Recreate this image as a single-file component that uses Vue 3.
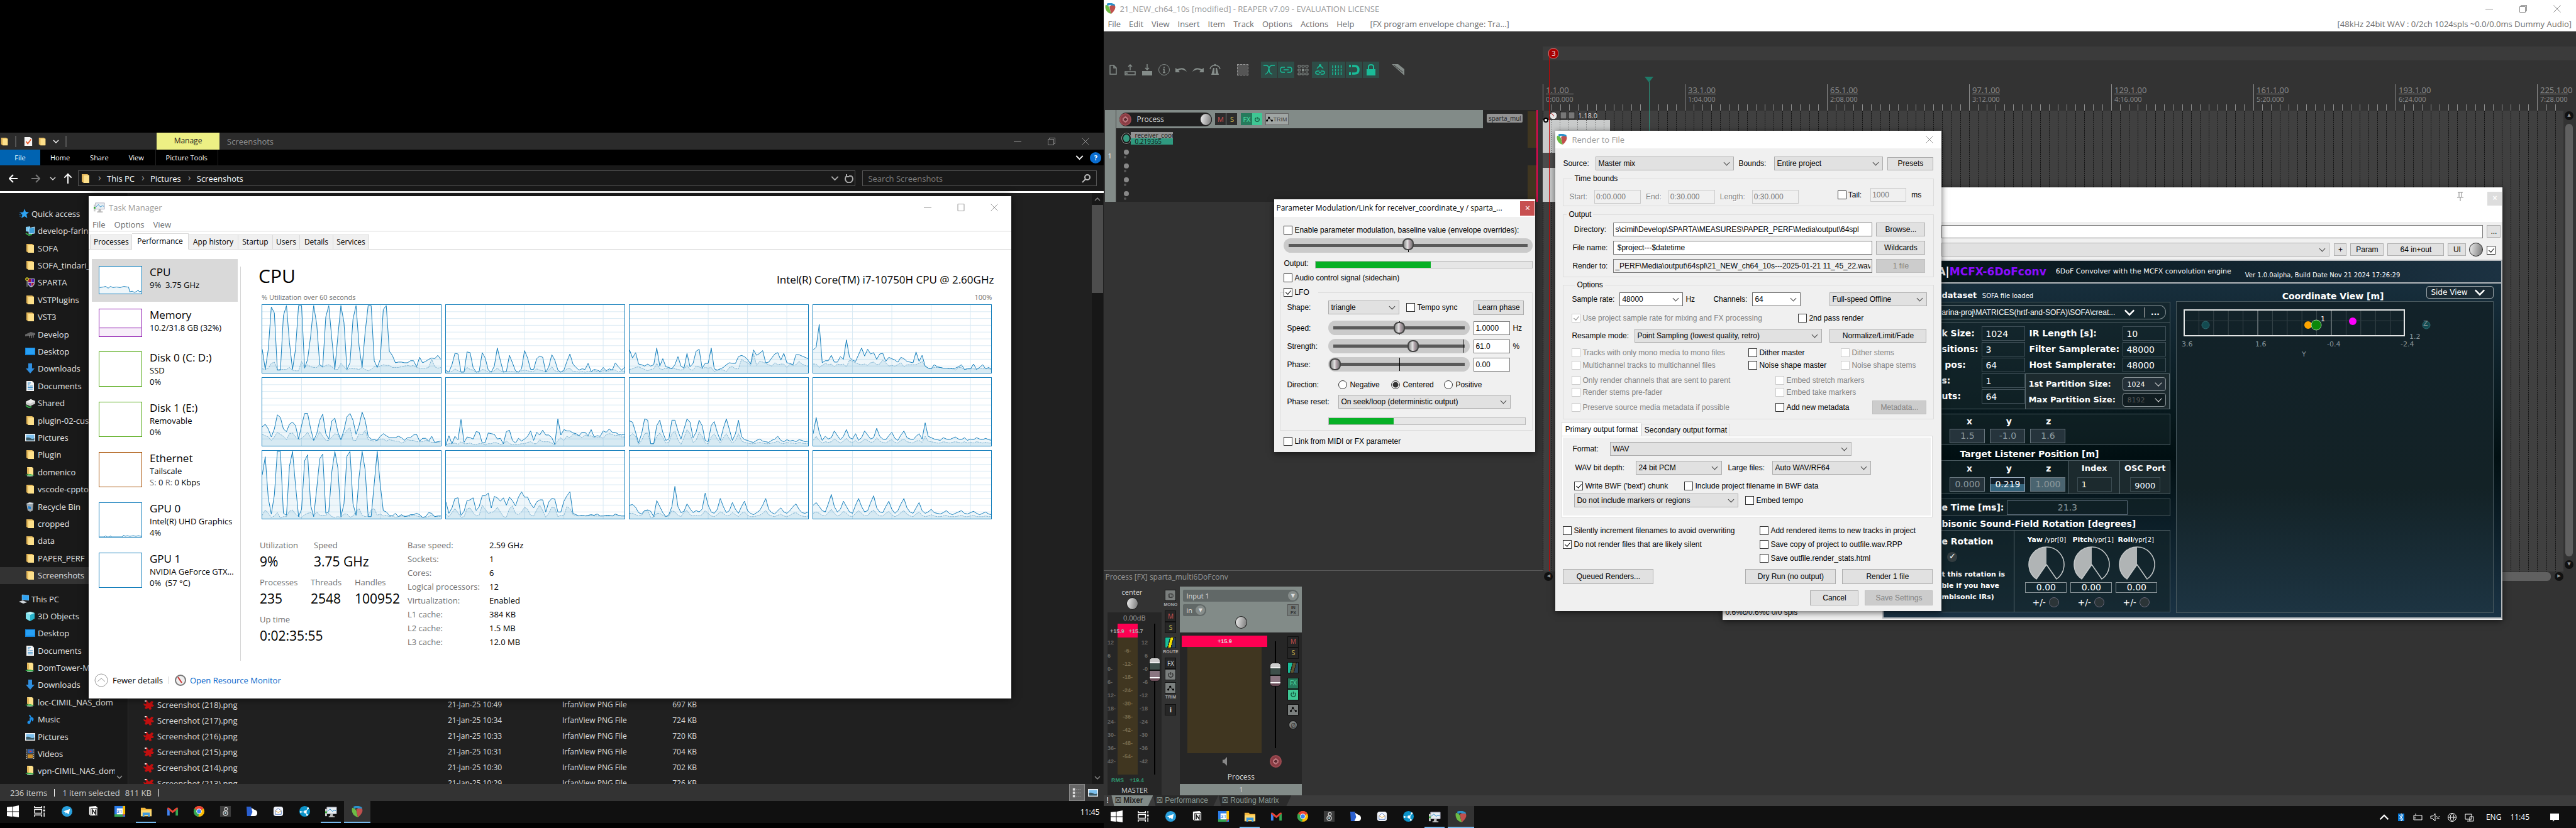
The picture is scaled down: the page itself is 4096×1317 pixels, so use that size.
<script setup>
const quick = [
  ['star', 'Quick access', true], ['netpc', 'develop-farina'], ['folder', 'SOFA'], ['folder', 'SOFA_tindari_'],
  ['shield', 'SPARTA'], ['folder', 'VSTPlugins'], ['folder', 'VST3'], ['chip', 'Develop'], ['desktop', 'Desktop'],
  ['down', 'Downloads'], ['doc', 'Documents'], ['drive', 'Shared'], ['folder', 'plugin-02-custom'], ['pic', 'Pictures'],
  ['folder', 'Plugin'], ['netfolder', 'domenico'], ['folder', 'vscode-cpptools'], ['bin', 'Recycle Bin'],
  ['folder', 'cropped'], ['folder', 'data'], ['folder', 'PAPER_PERF'], ['folder', 'Screenshots'],
]
const thisPc = [
  ['pc', 'This PC', true], ['cube', '3D Objects'], ['desktop', 'Desktop'], ['doc', 'Documents'], ['netfolder', 'DomTower-M'],
  ['down', 'Downloads'], ['netfolder', 'loc-CIMIL_NAS_dom'], ['music', 'Music'], ['pic', 'Pictures'], ['video', 'Videos'],
  ['netfolder', 'vpn-CIMIL_NAS_dom'],
]
const files = [
  ['218', '10:49', '697'], ['217', '10:34', '724'], ['216', '10:33', '720'],
  ['215', '10:31', '704'], ['214', '10:30', '702'], ['213', '10:29', '726'],
]
const apps = ['win', 'taskview', 'telegram', 'notion', 'cal', 'explorer', 'gmail', 'chrome', 'eight', 'bb', 'mail', 'share', 'monitor', 'reaper']
const appState = { explorer: 'open', monitor: 'open', reaper: 'open active' }
const crumbs = ['This PC', 'Pictures', 'Screenshots']

const tmTabs = ['Processes', 'Performance', 'App history', 'Startup', 'Users', 'Details', 'Services']
const devices = [
  { n: 'CPU', l: ['9%  3.75 GHz'], c: '#117dbb', on: true, line: '0,35 6,34 10,33 14,36 18,33 22,35 28,34 34,35 40,33 46,34 48,34 50,42 54,41 58,43 62,41 64,39 66,42 69,41' },
  { n: 'Memory', l: ['10.2/31.8 GB (32%)'], c: '#8b12ae', line: '0,31 69,31' },
  { n: 'Disk 0 (C: D:)', l: ['SSD', '0%'], c: '#4da60c', tall: true },
  { n: 'Disk 1 (E:)', l: ['Removable', '0%'], c: '#4da60c', tall: true },
  { n: 'Ethernet', l: ['Tailscale', null], c: '#a74f01', tall: true },
  { n: 'GPU 0', l: ['Intel(R) UHD Graphics', '4%'], c: '#117dbb', tall: true, line: '0,56 8,56 10,54 12,56 17,56 18,54 20,56 37,56 40,53 42,55 46,54 50,55 56,54 60,55 64,54 69,55' },
  { n: 'GPU 1', l: ['NVIDIA GeForce GTX...', '0%  (57 °C)'], c: '#117dbb', tall: true },
]
const stats = [
  [['Utilization', '9%'], ['Speed', '3.75 GHz']],
  [['Processes', '235'], ['Threads', '2548'], ['Handles', '100952']],
  [['Up time', '0:02:35:55']],
]
const specs = [
  ['Base speed:', '2.59 GHz'], ['Sockets:', '1'], ['Cores:', '6'], ['Logical processors:', '12'],
  ['Virtualization:', 'Enabled'], ['L1 cache:', '384 KB'], ['L2 cache:', '1.5 MB'], ['L3 cache:', '12.0 MB'],
]
const cores = [
  ['35,5,35,98,89,4,4,85,100,45,5,35,100,100,7,20,55,100,72,12,9,83,100,50,5,55,100,75,5,15,80,100,40,8,60,100,100,18,8,20,94,100,32,26,15,16,16,15,15,18,18,9,23,15,17,20,22,21,26,20',
    '6,5,7,14,16,5,5,5,5,8,4,3,3,17,9,12,9,8,8,12,8,11,12,9,5,5,14,9,4,7,6,6,5,8,5,3,5,9,9,10,12,11,11,8,8,8,9,10,11,10,11,8,7,7,7,8,20,9,7,8'],
  ['4,1,12,29,28,1,1,31,30,8,1,2,30,22,4,1,10,37,18,1,2,26,15,3,1,6,33,22,5,5,21,25,23,1,9,27,19,4,1,4,17,28,13,8,4,6,5,14,2,5,4,2,8,3,6,4,15,9,4,8',
    '1,1,2,6,3,1,2,8,5,4,1,1,5,4,1,1,3,7,3,1,2,2,2,1,1,3,4,3,2,2,6,4,3,1,4,9,3,2,1,2,6,7,2,2,1,2,1,2,2,3,2,1,4,2,3,5,4,1,3,2'],
  ['34,22,30,13,12,10,13,10,12,37,10,21,9,8,6,12,24,10,7,29,9,14,32,35,7,14,14,37,6,4,6,8,12,15,14,14,24,26,24,20,13,34,26,29,33,15,16,22,28,30,19,29,15,14,12,27,27,25,23,21',
    '5,6,8,9,7,5,3,5,6,14,6,5,7,6,7,6,5,4,6,11,5,4,10,9,6,8,7,8,2,4,5,4,2,8,9,6,6,20,17,15,11,28,11,17,16,14,12,10,15,12,13,13,8,13,11,12,17,13,11,10'],
  ['34,38,72,15,18,18,26,16,16,24,20,49,23,19,17,27,37,25,35,28,30,20,28,29,17,23,21,19,16,23,21,17,16,15,31,17,26,10,7,6,12,9,8,7,7,7,6,7,9,12,5,6,6,13,5,8,12,6,8,5',
    '13,13,8,11,14,12,13,9,13,12,13,9,19,17,15,13,12,13,11,15,16,12,13,19,15,10,11,10,12,15,9,12,12,12,12,14,17,10,7,6,8,8,8,7,7,6,7,4,8,8,5,6,6,6,5,7,6,6,6,5'],
  ['28,32,25,13,25,46,42,25,21,32,35,30,10,30,48,48,25,8,18,38,47,18,10,37,41,20,9,23,43,48,38,17,30,50,38,14,10,9,8,14,18,15,12,12,12,14,12,8,12,12,16,17,7,11,11,7,14,5,6,7',
    '17,15,13,8,13,20,17,14,9,18,19,13,9,11,15,20,12,8,12,21,14,8,8,13,18,16,9,17,23,27,8,8,18,16,23,9,8,7,8,10,10,7,9,8,7,7,4,6,9,8,8,6,6,6,8,7,5,5,5,4'],
  ['1,15,3,14,9,39,5,13,12,10,21,20,4,5,19,18,17,10,11,3,21,23,8,4,11,7,10,14,22,8,20,16,23,16,16,12,2,40,16,24,22,22,19,18,15,20,20,15,24,13,15,14,22,20,25,20,20,17,16,17',
    '1,3,3,4,2,6,3,3,4,2,2,3,3,2,3,3,5,4,2,3,7,3,2,2,2,3,3,5,6,3,3,9,6,6,6,4,1,8,12,8,14,12,17,16,15,12,16,14,15,12,12,13,11,17,18,17,15,16,13,13'],
  ['37,35,20,4,18,40,38,3,3,30,38,20,8,10,38,38,22,10,25,40,35,12,20,38,30,8,6,30,36,20,8,26,40,24,8,18,38,14,9,8,6,5,8,10,7,6,5,8,10,14,8,6,9,7,8,6,9,8,6,7',
    '14,18,14,2,8,18,19,3,3,14,19,12,4,5,18,22,9,2,12,24,18,5,8,20,14,4,3,13,18,10,4,12,18,10,4,8,18,7,5,4,3,3,4,5,4,3,3,4,5,7,4,3,5,4,4,3,5,4,3,4'],
  ['18,42,20,8,14,10,12,22,15,9,14,24,12,10,18,8,12,22,16,10,12,26,14,10,9,15,20,11,8,16,22,12,10,9,14,18,10,34,14,12,10,9,8,12,10,9,11,13,10,9,12,8,10,9,12,10,9,11,9,8',
    '8,14,8,4,6,5,6,10,7,4,7,11,6,5,8,4,6,10,8,5,6,12,7,5,4,7,9,5,4,8,10,6,5,4,7,8,5,14,7,6,5,4,4,6,5,4,5,6,5,4,6,4,5,4,6,5,4,5,4,4'],
  ['65,92,30,7,35,100,100,8,5,78,100,50,3,14,86,95,20,3,45,89,96,8,10,70,100,75,3,22,93,100,22,5,62,100,73,3,3,52,100,50,12,10,5,4,8,3,6,3,4,6,6,8,6,2,3,9,8,3,4,4',
    '5,13,8,2,4,9,1,3,3,11,13,7,3,2,6,8,9,5,10,5,5,5,8,3,2,3,2,7,7,2,4,11,15,5,3,4,13,15,5,7,4,5,3,4,2,3,4,4,3,4,6,4,3,2,2,3,6,3,3,4'],
  ['25,8,16,30,31,5,11,27,28,31,12,18,34,34,38,16,33,31,26,31,20,32,27,19,32,40,32,32,22,16,25,28,28,10,25,30,29,10,10,26,34,40,8,6,4,5,4,5,6,5,7,4,4,5,5,4,7,5,4,4',
    '7,3,9,15,9,2,3,15,16,9,4,5,20,14,8,9,11,17,10,3,2,15,19,8,6,10,17,14,5,4,13,20,12,2,8,17,16,3,5,5,18,15,6,5,4,5,4,4,5,4,4,4,4,4,4,4,6,5,4,4'],
  ['20,21,17,9,7,12,13,11,3,27,18,9,3,6,18,48,18,9,11,22,15,9,12,10,14,38,20,10,8,14,30,18,9,12,24,14,8,18,26,12,8,6,9,12,20,30,14,9,7,12,16,10,8,12,18,22,14,9,8,10',
    '8,8,6,4,5,12,12,2,2,8,8,5,3,4,12,10,5,3,10,12,6,4,5,4,6,12,8,4,3,6,10,8,4,5,9,6,3,8,10,5,3,3,4,5,8,12,6,4,3,5,7,4,3,5,8,9,6,4,3,4'],
  ['20,24,18,12,10,22,36,18,10,14,26,18,10,8,20,30,18,10,12,24,34,16,10,9,18,26,14,8,12,22,30,16,10,8,16,24,12,8,10,14,9,8,7,9,12,8,6,8,10,12,8,7,9,11,8,6,8,10,7,6',
    '8,10,8,5,4,9,14,8,4,6,11,8,4,3,8,12,8,4,5,10,13,7,4,4,8,11,6,3,5,9,12,7,4,3,7,10,5,3,4,6,4,3,3,4,5,3,3,3,4,5,3,3,4,5,3,3,3,4,3,3'],
].map(pair => pair.map(s => s.split(',').map((v, i, a) => `${(i * 286 / (a.length - 1)).toFixed(1)},${(110 - v * 1.09).toFixed(1)}`).join(' ')))

const menus = ['File', 'Edit', 'View', 'Insert', 'Item', 'Track', 'Options', 'Actions', 'Help']
const tools = ['new', 'open', 'save', 'info', 'undo', 'redo', 'metro']
const modes = [['xfade', 1], ['link', 1], ['group', 0], ['envlink', 1], ['gridlines', 1], ['snap', 1], ['lock', 1]]
const marks = ['1.1.00', '33.1.00', '65.1.00', '97.1.00', '129.1.00', '161.1.00', '193.1.00', '225.1.00']
const times = ['0:00.000', '1:04.000', '2:08.000', '3:12.000', '4:16.000', '5:20.000', '6:24.000', '7:28.000']
const ticks = Array.from({ length: 115 }, (_, i) => Math.round(i * 14.12))
const scaleL = ['12', '6', '0-', '6-', '12-', '18-', '24-', '30-', '36-', '42-']
const scaleR = ['12', '6', '-0', '-6', '-12', '-18', '-24', '-30', '-36', '-42']
const scaleC = ['-6-', '-12-', '-18-', '-24-', '-30-', '-36-', '-42-', '-48-', '-54-']
const lfo = [
  { n: 'Speed:', v: 50, t: '1.0000', u: 'Hz', m: 50 },
  { n: 'Strength:', v: 61, t: '61.0', u: '%', m: 95 },
  { n: 'Phase:', v: 0, t: '0.00', u: '', m: 50 },
]
const paths = [
  ['Directory:', 's\\cimil\\Develop\\SPARTA\\MEASURES\\PAPER_PERF\\Media\\output\\64spl', 'Browse...'],
  ['File name:', ' $project---$datetime', 'Wildcards'],
  ['Render to:', '_PERF\\Media\\output\\64spl\\21_NEW_ch64_10s---2025-01-21 11_45_22.wav', '1 file'],
]
const sofaRows = [['k Size:', '1024'], ['sitions:', '3'], ['\u00a0pos:', '64'], ['s:', '1'], ['uts:', '64']]
const irRows = [['IR Length [s]:', '10'], ['Filter Samplerate:', '48000'], ['Host Samplerate:', '48000']]
const rot = [['Yaw', ' /ypr[0]'], ['Pitch', '/ypr[1]'], ['Roll', '/ypr[2]']]
</script>

<template>
  <svg class="defs" width="0" height="0" aria-hidden="true">
    <symbol id="folder" viewBox="0 0 16 16"><path d="M2 1h9l3 2v12H5l-3-2z" fill="#e3b75a" /><path d="M5 3h9v12H5z" fill="#fde08b" /></symbol>
    <symbol id="netfolder" viewBox="0 0 16 16"><path d="M3 0h8l2 2v10H5l-2-2z" fill="#fde08b" /><path d="M3 0l3 2v10l-3-2z" fill="#e3b75a" /><path d="M0 12l8-1 7 2-8 2z" fill="#37b24d" /><path d="M3 14h9" stroke="#ddd" /></symbol>
    <symbol id="star" viewBox="0 0 16 16"><path d="M9 0l2 5 5 .5-4 3.500 1.500 6L9 12l-5 3 1.500-5.500L2 6l5-.5z" fill="#2ea3f2" /><path d="M1 6h4M0 9h4M1 12h3" stroke="#1f6fb0" /></symbol>
    <symbol id="netpc" viewBox="0 0 16 16"><path d="M1 2l7-1v9l-7-1z" fill="#7cc8f0" /><path d="M6 4l9-2v10l-9 1z" fill="#3f9fd8" stroke="#bfe3f7" /><path d="M1 12l5 3 5-1" stroke="#37b24d" stroke-width="2" fill="none" /></symbol>
    <symbol id="shield" viewBox="0 0 16 16"><path d="M4 2h11v8q-1 4-5.500 6Q5 14 4 10z" fill="#b8b8c8" /><path d="M5 3h4v5H5zM10 9h4q-1 4-4 5z" fill="#a3123a" /><path d="M10 3h4v5h-4zM5 9h4v5q-3-1-4-5z" fill="#4b1fb5" /><circle cx="3" cy="3" r="2" fill="none" stroke="#e8d820" stroke-width="1.500" /><path d="M3 5v10" stroke="#aaa" /></symbol>
    <symbol id="chip" viewBox="0 0 16 16"><path d="M0 8l9-4 7 2v3l-9 1-7 1z" fill="#666" /><path d="M7 9v4M10 9v5M13 9v4" stroke="#999" /></symbol>
    <symbol id="desktop" viewBox="0 0 16 16"><path d="M0 2h16v12H0z" fill="#1583d8" /><path d="M1 3h14v9H1z" fill="#27a0f5" /></symbol>
    <symbol id="down" viewBox="0 0 16 16"><path d="M5 0h6v8h4l-7 8-7-8h4z" fill="#2f8fe0" /></symbol>
    <symbol id="doc" viewBox="0 0 16 16"><path d="M2 0h9l3 3v13H2z" fill="#f4f4f4" /><path d="M4 3h5M4 5h3M8 8h4M4 8h3M4 10.500h8M4 13h8" stroke="#2b88c8" /></symbol>
    <symbol id="task" viewBox="0 0 16 16"><path d="M1 0h10l4 3v13H1z" fill="#f4f4f4" /><path d="M4 8l3 4 6-8" fill="none" stroke="#e8531f" stroke-width="2" /></symbol>
    <symbol id="drive" viewBox="0 0 16 16"><path d="M1 6l8-4 7 3v4l-8 4-7-3z" fill="#c9c9c9" /><path d="M1 6l7 3 8-4-7-3z" fill="#ececec" /><path d="M1 12l5 3 4-1" stroke="#37b24d" stroke-width="2" fill="none" /></symbol>
    <symbol id="pic" viewBox="0 0 16 16"><path d="M0 2h16v12H0z" fill="#f2f2f2" /><path d="M1.500 3.500h13v9h-13z" fill="#7cc0ee" /><path d="M1.500 12.500V8q4-1 7 1t6 0v3.500z" fill="#3c5a66" /></symbol>
    <symbol id="bin" viewBox="0 0 16 16"><path d="M2 3l11-1-1 12-4 2-4-2z" fill="#9aa4ac" /><path d="M2 3l5-2 7 1-5 2z" fill="#dfe5ea" /><path d="M5 7l4 1v4l-4-1z" fill="#1d7fd1" /></symbol>
    <symbol id="pc" viewBox="0 0 16 16"><path d="M5 1l11 1v8L5 9z" fill="#2ea3f2" stroke="#bcd" stroke-width=".5" /><path d="M0 12l6-2 7 3-6 2z" fill="#cfd5da" /></symbol>
    <symbol id="cube" viewBox="0 0 16 16"><path d="M1 3l7-2 7 2v9l-7 4-7-4z" fill="#28b4cc" /><path d="M1 3l7 3v10l-7-4z" fill="#7fe2ee" /><path d="M1 3l7-2 7 2-7 3z" fill="#b9f3f8" /></symbol>
    <symbol id="music" viewBox="0 0 16 16"><path d="M7 1q1 4 4 5t0 5q2-3-3-4v5" fill="none" stroke="#1e90ea" stroke-width="2" /><circle cx="6" cy="13" r="2.500" fill="#1e90ea" /></symbol>
    <symbol id="video" viewBox="0 0 16 16"><path d="M1 0h14v16H1z" fill="#444" /><path d="M4 1h8v6H4z" fill="#2a62b5" /><path d="M4 9h8v6H4z" fill="#c58b2a" /><path d="M2.500 0v16M13.500 0v16" stroke="#ddd" stroke-dasharray="1 2" /><path d="M7 3h3v2H7z" fill="#e33" /></symbol>
    <symbol id="irfan" viewBox="0 0 18 16"><path d="M5 1q3-1 3 3l3 1 3-3 3 1-2 4 3 2-2 2h-3l1 4-3 1-2-3-4 2-2-2 2-3-3-1-1-3 4 1 1-2-2-2z" fill="#c00f0f" /><path d="M3 1h3v2H3z" fill="#eee" /></symbol>
    <symbol id="chev" viewBox="0 0 10 10"><path d="M1 3l4 4 4-4" fill="none" stroke="currentColor" stroke-width="1.400" /></symbol>
    <symbol id="min" viewBox="0 0 12 12"><path d="M0 6.500h12" stroke="currentColor" /></symbol>
    <symbol id="max" viewBox="0 0 12 12"><path d="M1 .5h10v11H1z" fill="none" stroke="currentColor" /></symbol>
    <symbol id="restore" viewBox="0 0 12 12"><path d="M.5 2.500h9v9h-9zM2.500 2.500v-2h9v9h-2" fill="none" stroke="currentColor" /></symbol>
    <symbol id="x" viewBox="0 0 12 12"><path d="M.5.5l11 11M11.500.5l-11 11" stroke="currentColor" /></symbol>
    <symbol id="power" viewBox="0 0 10 10"><path d="M3 2.500a3.300 3.300 0 1 0 4 0M5 1v4" fill="none" stroke="currentColor" stroke-width="1.300" /></symbol>
    <symbol id="env" viewBox="0 0 14 12"><path d="M2 9l4-6 5 6" fill="none" stroke="currentColor" stroke-width="1.500" /><circle cx="6" cy="3" r="2" /><circle cx="2" cy="9" r="2" /><circle cx="12" cy="9" r="2" /></symbol>

    <symbol id="win" viewBox="0 0 20 20"><path d="M0 3l9-1v8H0zM10 2l10-2v10H10zM0 11h9v8l-9-1zM10 11h10v9l-10-1.500z" fill="#fff" /></symbol>
    <symbol id="taskview" viewBox="0 0 20 20"><path d="M1 1v3h12V1M1 19v-3h12v3M1 7h12v6H1zM17 1v4M17 12v7" fill="none" stroke="#fff" stroke-width="1.500" /><path d="M15.500 7h3v3h-3z" fill="#fff" /></symbol>
    <symbol id="telegram" viewBox="0 0 20 20"><circle cx="10" cy="10" r="9" fill="#2aa1de" /><path d="M4 10l11-4-2 9-4-3-1 2-1-3z" fill="#fff" /></symbol>
    <symbol id="notion" viewBox="0 0 20 20"><path d="M3 2l11-1 3 3v13l-11 1-3-3z" fill="#fff" /><path d="M6 5h10v12H6z" fill="#fff" stroke="#111" /><path d="M8.500 15V7.500l5 7V7" fill="none" stroke="#111" stroke-width="1.600" /></symbol>
    <symbol id="cal" viewBox="0 0 20 20"><path d="M1 1h18v18H1z" fill="#2b7de9" /><path d="M15 1h4v14h-4z" fill="#fbbc04" /><path d="M1 15h14v4H1z" fill="#34a853" /><path d="M15 15h4l-4 4z" fill="#ea4335" /><path d="M5 5h10v10H5z" fill="#fff" /></symbol>
    <symbol id="explorer" viewBox="0 0 20 20"><path d="M1 3h7l2 2h9v12H1z" fill="#f5b83d" /><path d="M1 7h18v10H1z" fill="#ffd970" /><path d="M4 11h12v7h-3v-3H7v3H4z" fill="#3f9be0" /></symbol>
    <symbol id="gmail" viewBox="0 0 20 20"><path d="M1 5v12h4V9z" fill="#4285f4" /><path d="M19 5v12h-4V9z" fill="#34a853" /><path d="M1 5q0-2 3-1l6 5 6-5q3-1 3 1l-4 4-5 4-5-4z" fill="#ea4335" /></symbol>
    <symbol id="chrome" viewBox="0 0 20 20"><circle cx="10" cy="10" r="9" fill="#fbbc04" /><path d="M10 10L2.200 5.500A9 9 0 0 1 17.800 5.500z" fill="#ea4335" /><path d="M10 10L2.200 5.500A9 9 0 0 0 9 19z" fill="#34a853" /><circle cx="10" cy="10" r="4.500" fill="#fff" /><circle cx="10" cy="10" r="3.500" fill="#4285f4" /></symbol>
    <symbol id="eight" viewBox="0 0 20 20"><path d="M1 1h18v18H1z" fill="#3c3c3c" /><circle cx="10" cy="13" r="3.800" fill="none" stroke="#ccc" stroke-width="1.500" /><circle cx="11" cy="6" r="2.500" fill="none" stroke="#ccc" stroke-width="1.300" /><circle cx="10" cy="13" r="1.500" fill="#b8e4ee" /></symbol>
    <symbol id="bb" viewBox="0 0 20 20"><path d="M1 2h8v4l3 2-2 10H2z" fill="#2a5fd0" /><path d="M9 4l5 3q5 1 5 6t-5 5H8l3-7z" fill="#fff" /></symbol>
    <symbol id="mail" viewBox="0 0 20 20"><rect x="2" y="2" width="16" height="16" rx="4" fill="#f1f4fa" /><path d="M5 9l5-4 5 4v6H5z" fill="#fff" stroke="#5b7fc4" /><path d="M5 9l5 3 5-3" fill="none" stroke="#e0a030" /></symbol>
    <symbol id="share" viewBox="0 0 20 20"><circle cx="10" cy="10" r="9" fill="#0b93c9" /><path d="M3 11h8l5-6M11 11l3 5" fill="none" stroke="#fff" stroke-width="1.200" /><circle cx="11" cy="11" r="2.500" fill="#fff" /><circle cx="3.500" cy="11" r="1.500" fill="#fff" /><circle cx="15.500" cy="5" r="1.500" fill="#fff" /><circle cx="14" cy="16" r="1.500" fill="#fff" /></symbol>
    <symbol id="monitor" viewBox="0 0 20 20"><path d="M3 2h16v11H3z" fill="#e8eef2" stroke="#aab" /><path d="M4 9l4-4 4 4 3-2 3 1" fill="none" stroke="#1583c8" /><path d="M9 13h4v4H8zM6 17h10v2H6z" fill="#bbb" /><path d="M0 5h3v12H0z" fill="#ccc" /><path d="M0 9h3v3H0z" fill="#3a3" /></symbol>
    <symbol id="reaper" viewBox="0 0 20 20"><path d="M3 1q7-3 14 1 2 3-1 6L9 3 4 5z" fill="#2b93cc" /><path d="M1 3q5 1 7 5 1 6 3 11Q3 17 1 10 0 6 1 3z" fill="#6cbb45" /><path d="M8 5q6-2 10 0 2 6-7 14-2-5-3-14z" fill="#c0504d" /></symbol>

    <symbol id="new" viewBox="0 0 20 20"><path d="M5 3h6l4 4v10H5zM11 3v4h4" fill="none" stroke="currentColor" stroke-width="1.500" /></symbol>
    <symbol id="open" viewBox="0 0 20 20"><path d="M10 11V3M7 5l3-3 3 3M2 13h16v5H2z" fill="none" stroke="currentColor" stroke-width="1.500" /><path d="M3 14.500h3v2H3z" fill="currentColor" /></symbol>
    <symbol id="save" viewBox="0 0 20 20"><path d="M10 1v8M7 7l3 3 3-3" fill="none" stroke="currentColor" stroke-width="1.500" /><path d="M2 12h16v7H2z" fill="currentColor" /></symbol>
    <symbol id="info" viewBox="0 0 20 20"><circle cx="10" cy="10" r="8.500" fill="none" stroke="currentColor" /><path d="M10 5v2M8 9h2v5M8 14.500h4" fill="none" stroke="currentColor" stroke-width="1.600" /></symbol>
    <symbol id="undo" viewBox="0 0 20 20"><path d="M1 7v7h7l-2-3q5-4 13 2Q15 4 4 9z" fill="currentColor" /></symbol>
    <symbol id="redo" viewBox="0 0 20 20"><path d="M19 7v7h-7l2-3Q9 7 1 13 5 4 16 9z" fill="currentColor" /></symbol>
    <symbol id="metro" viewBox="0 0 20 20"><path d="M7 7h2v9h2V7h2l3 11H4z" fill="currentColor" /><path d="M2 9q1-5 6-6M18 9q-1-5-6-6" fill="none" stroke="currentColor" stroke-width="1.500" /><circle cx="10" cy="2.500" r="1.800" fill="currentColor" /></symbol>
    <symbol id="xfade" viewBox="0 0 20 20"><path d="M1 3h5q4 1 4 7t5 7M19 3h-5q-4 1-5 7t-5 7" fill="none" stroke="currentColor" stroke-width="1.400" /></symbol>
    <symbol id="link" viewBox="0 0 20 20"><path d="M8 6H4q-3 0-3 4t3 4h4M12 6h4q3 0 3 4t-3 4h-4M6 10h8" fill="none" stroke="currentColor" stroke-width="1.500" /></symbol>
    <symbol id="group" viewBox="0 0 20 20"><path d="M2 3h4v3H2zM8 3h4v3H8zM14 3h4v3h-4zM2 9h4v3H2zM14 9h4v3h-4zM2 15h4v3H2zM8 15h4v3H8zM14 15h4v3h-4z" fill="none" stroke="currentColor" /><path d="M8 8.500h4v4H8z" fill="currentColor" /></symbol>
    <symbol id="envlink" viewBox="0 0 20 20"><path d="M5 8l5-5 5 5M9 12H6q-3 0-3 2.500T6 17h3M11 12h3q3 0 3 2.500T14 17h-3M8 14.500h4" fill="none" stroke="currentColor" stroke-width="1.500" /><circle cx="10" cy="3" r="2" fill="currentColor" /></symbol>
    <symbol id="gridlines" viewBox="0 0 20 20"><path d="M3 3v15M7.500 3v15M12 3v15M16.500 3v15" stroke="currentColor" stroke-width="1.400" stroke-dasharray="4 1.500" /></symbol>
    <symbol id="snap" viewBox="0 0 20 20"><path d="M7 4h4q6 0 6 6t-6 6H7" fill="none" stroke="currentColor" stroke-width="3.500" /><path d="M2 2h3v4H2zM2 14h3v4H2z" fill="currentColor" /></symbol>
    <symbol id="lock" viewBox="0 0 20 20"><path d="M3 9h14v10H3z" fill="currentColor" /><path d="M6 9V5q0-3 4-3t4 3v4" fill="none" stroke="currentColor" stroke-width="2" /></symbol>
    <symbol id="razor" viewBox="0 0 20 20"><path d="M0 1h10l10 8v10z" fill="currentColor" /><path d="M4 3l14 11" stroke="#333" /></symbol>
  </svg>

  <main class="desk">
    <section class="left">
      <div class="void" />
      <header class="ex-title">
        <svg class="i14"><use href="#folder" /></svg><i class="vsep" />
        <svg class="i14 gapl"><use href="#task" /></svg><svg class="i14 gaps"><use href="#folder" /></svg>
        <svg class="i10"><use href="#chev" /></svg><i class="vsep" />
        <span class="manage">Manage</span><span class="ex-name">Screenshots</span>
        <div class="wbtns"><svg><use href="#min" /></svg><svg><use href="#restore" /></svg><svg><use href="#x" /></svg></div>
      </header>
      <nav class="ribbon">
        <a href="#" class="file">File</a><a href="#">Home</a><a href="#">Share</a><a href="#">View</a><a href="#" class="pt">Picture Tools</a>
        <span class="rend"><svg class="i13"><use href="#chev" /></svg><b>?</b></span>
      </nav>
      <div class="addr">
        <svg class="arr" viewBox="0 0 14 14"><path d="M14 7H1M7 1L1 7l6 6" /></svg>
        <svg class="arr dim" viewBox="0 0 14 14"><path d="M0 7h13M7 1l6 6-6 6" /></svg>
        <svg class="i10 rc"><use href="#chev" /></svg>
        <svg class="arr up" viewBox="0 0 14 18"><path d="M7 18V2M1 8l6-6 6 6" /></svg>
        <div class="path">
          <svg class="i16"><use href="#folder" /></svg>
          <template v-for="c in crumbs" :key="c"><i>›</i><span>{{ c }}</span></template>
          <svg class="i13 pd"><use href="#chev" /></svg>
          <svg class="rf" viewBox="0 0 14 14"><path d="M3 3a6 6 0 1 0 8 0M11 3h-4M3 0v4h4" /></svg>
        </div>
        <label class="search"><input aria-label="Search Screenshots" placeholder="Search Screenshots"><svg viewBox="0 0 14 14"><circle cx="9" cy="5" r="4" /><path d="M6 8l-5 5" /></svg></label>
      </div>
      <div class="ex-body">
        <aside>
          <ul class="q">
            <li v-for="[ic, t, top] in quick" :key="t" :class="{ top, sel2: t === 'Screenshots' }"><svg><use :href="'#' + ic" /></svg>{{ t }}</li>
          </ul>
          <ul class="p">
            <li v-for="[ic, t, top] in thisPc" :key="t" :class="{ top }"><svg><use :href="'#' + ic" /></svg>{{ t }}</li>
          </ul>
          <svg class="i10 more"><use href="#chev" /></svg>
        </aside>
        <div class="list">
          <table>
            <tbody>
              <tr v-for="[n, t, s] in files" :key="n">
                <td class="c1"><svg><use href="#irfan" /></svg>Screenshot ({{ n }}).png</td><td class="c2">21-Jan-25 {{ t }}</td><td class="c3">IrfanView PNG File</td><td class="c4">{{ s }} KB</td><td />
              </tr>
            </tbody>
          </table>
        </div>
        <div class="vbar"><svg class="i10 flip"><use href="#chev" /></svg><i /><svg class="i10"><use href="#chev" /></svg></div>
      </div>
      <footer class="status"><span>236 items</span><i /><span>1 item selected</span><span>811 KB</span><i />
        <div class="views"><b><svg viewBox="0 0 20 20"><path d="M2 2h4v4H2zM2 8h4v4H2zM2 14h4v4H2z" fill="#ddd" /><path d="M8 4h9M8 10h9M8 16h9" stroke="#999" stroke-dasharray="2 1" /></svg></b><svg class="i16"><use href="#pic" /></svg></div>
      </footer>
      <div class="taskbar bar-l">
        <button v-for="a in apps" :key="a" :class="[a, appState[a]]" :aria-label="a"><svg><use :href="'#' + a" /></svg><b v-if="a === 'cal'">31</b></button>
        <span class="clock">11:45</span>
      </div>
      <div class="strip" />

      <article class="tm">
        <header><svg class="i18"><use href="#monitor" /></svg><span>Task Manager</span>
          <div class="wbtns"><svg><use href="#min" /></svg><svg><use href="#max" /></svg><svg><use href="#x" /></svg></div></header>
        <nav class="tm-menu"><a href="#">File</a><a href="#">Options</a><a href="#">View</a></nav>
        <div class="tm-tabs"><button v-for="(t, i) in tmTabs" :key="t" :class="{ on: i === 1 }">{{ t }}</button></div>
        <div class="tm-body">
          <div class="devs">
            <div v-for="d in devices" :key="d.n" class="dev" :class="{ on: d.on, tall: d.tall }">
              <svg :style="{ color: d.c }" :viewBox="d.tall ? '0 0 69 56' : '0 0 69 45'">
                <polyline v-if="d.line" :points="`0,60 ${d.line} 69,60`" fill="currentColor" fill-opacity=".07" stroke="none" /><polyline v-if="d.line" :points="d.line" fill="none" stroke="currentColor" />
              </svg>
              <div><h3>{{ d.n }}</h3><p v-for="l in d.l" :key="l"><template v-if="l">{{ l }}</template><template v-else><em>S:</em> 0 <em>R:</em> 0 Kbps</template></p></div>
            </div>
          </div>
          <div class="perf">
            <div class="ph"><h1>CPU</h1><span>Intel(R) Core(TM) i7-10750H CPU @ 2.60GHz</span></div>
            <div class="pl"><span>% Utilization over 60 seconds</span><span>100%</span></div>
            <div class="graphs">
              <svg v-for="([u, k], i) in cores" :key="i" viewBox="0 0 286 110" preserveAspectRatio="none">
                <path d="M63 0v110M126 0v110M189 0v110M252 0v110M0 11h286M0 22h286M0 33h286M0 44h286M0 55h286M0 66h286M0 77h286M0 88h286M0 99h286" class="gl" />
                <polygon :points="`0,110 ${u} 286,110`" class="gu" /><polygon :points="`0,110 ${k} 286,110`" class="gk" />
                <polyline :points="k" class="lk" /><polyline :points="u" class="lu" />
              </svg>
            </div>
            <div class="pstats">
              <div class="big"><div v-for="(r, i) in stats" :key="i" :class="'r' + i"><dl v-for="[a, b] in r" :key="a"><dt>{{ a }}</dt><dd>{{ b }}</dd></dl></div></div>
              <table class="spec"><tbody><tr v-for="[a, b] in specs" :key="a"><th>{{ a }}</th><td>{{ b }}</td></tr></tbody></table>
            </div>
          </div>
        </div>
        <footer><svg class="cir" viewBox="0 0 22 22"><circle cx="11" cy="11" r="10" /><path d="M5 13l6-5 6 5" /></svg><span>Fewer details</span><i />
          <svg class="rm" viewBox="0 0 18 18"><circle cx="9" cy="9" r="8" fill="#eee" stroke="#777" stroke-width="2" /><path d="M5 4l6 9" stroke="#c33" stroke-width="2" /></svg><a href="#">Open Resource Monitor</a></footer>
      </article>
    </section>

    <section class="right">
      <header class="rp-title"><svg class="i18"><use href="#reaper" /></svg><span>21_NEW_ch64_10s [modified] - REAPER v7.09 - EVALUATION LICENSE</span>
        <div class="wbtns"><svg><use href="#min" /></svg><svg><use href="#restore" /></svg><svg><use href="#x" /></svg></div></header>
      <nav class="rp-menu"><a v-for="m in menus" :key="m" href="#">{{ m }}</a><span class="last">[FX program envelope change: Tra...]</span><span class="audio">[48kHz 24bit WAV : 0/2ch 1024spls ~0.0/0.0ms Dummy Audio]</span></nav>

      <div class="work">
        <div class="tcp">
          <div class="tools">
            <button v-for="t in tools" :key="t" :aria-label="t"><svg><use :href="'#' + t" /></svg></button>
            <i class="marq" />
            <button v-for="[t, on] in modes" :key="t" :class="{ on }" :aria-label="t"><svg><use :href="'#' + t" /></svg></button>
            <button class="rz" aria-label="razor"><svg><use href="#razor" /></svg></button>
          </div>
          <div class="track">
            <div class="tnum">1</div>
            <div class="tmain">
              <div class="thead">
                <div class="pill"><i class="rec" /><span>Process</span><i class="knob" /></div>
                <div class="ms"><button class="m">M</button><button class="s">S</button></div>
                <div class="fx"><button>FX</button><button class="pw" aria-label="bypass"><svg><use href="#power" /></svg></button></div>
                <button class="trim"><svg><use href="#env" /></svg>TRIM</button>
              </div>
              <div class="param"><i /><div><span>receiver_coor</span><b>0.219365</b></div></div>
              <div class="dots"><i v-for="n in 4" :key="n" /></div>
            </div>
            <div class="tfx"><span>sparta_mul</span></div>
            <div class="tmeter"><i /><i /></div>
          </div>
        </div>
        <div class="arr-pane">
          <div class="region"><b>3</b></div>
          <svg class="ruler" height="42"><g v-for="(m, i) in marks" :key="m">
            <rect :x="ticks[i * 16]" y="0" width="1" height="42" fill="#8c8c8c" />
            <text :x="ticks[i * 16] + 5" y="14" class="t1">{{ m }}</text><rect :x="ticks[i * 16] + 5" y="15" width="44" height="1" fill="#8c8c8c" />
            <text :x="ticks[i * 16] + 5" y="28" class="t2">{{ times[i] }}</text></g>
            <rect v-for="t in ticks" :key="t" :x="t" y="32" width="1" height="10" fill="#8c8c8c" />
          </svg>
          <svg class="lanes">
            <line v-for="t in ticks" :key="t" :x1="t + .5" :x2="t + .5" y1="0" y2="733" stroke="#151515" stroke-dasharray="2 1" />
            <rect x="0" y="15" width="107" height="130" fill="#c9cbcb" /><rect x="0" y="67" width="107" height="24" fill="#4c4c4c" />
            <line v-for="n in 7" :key="n" :x1="n * 14 - .5" :x2="n * 14 - .5" y1="15" y2="67" stroke="#444" stroke-dasharray="1 2" />
            <circle cx="17" cy="8" r="6" fill="#e6e6e6" stroke="#222" /><path d="M14 4l4 5" stroke="#a00" />
            <path d="M28 2h10v11H28zM41 2h10v11H41z" fill="#777" stroke="#222" />
            <text x="56" y="12" class="it">1.18.0</text>
            <circle cx="5" cy="15" r="3" fill="#fff" stroke="#000" stroke-width="2" />
          </svg>
          <i class="cursor" /><i class="play" />
          <div class="vs"><b>▲</b><i /><b>▼</b></div>
          <div class="hs"><b>◀</b><i /><b>▶</b></div>
        </div>
      </div>

      <div class="mixer">
        <p class="mx-l">Process [FX] sparta_multi6DoFconv</p>
        <div class="strips">
          <div class="master">
            <div class="mcol">
              <span class="ctr">center</span><i class="kn" />
              <div class="mbox">
                <span class="db">0.00dB</span>
                <div class="meters">
                  <ul class="sc"><li v-for="s in scaleL" :key="s">{{ s }}</li></ul>
                  <div class="mt"><i /><ul><li v-for="s in scaleC" :key="s">{{ s }}</li></ul></div>
                  <ul class="sc r"><li v-for="s in scaleR" :key="s">{{ s }}</li></ul>
                  <div class="fad"><i /></div>
                  <span class="pk"><b>+15.9</b><b>+15.7</b></span>
                </div>
                <span class="rms"><b>RMS</b><b>+19.4</b></span>
                <span class="mn">MASTER</span>
              </div>
            </div>
            <div class="mbt">
              <button class="g" aria-label="mono"><svg viewBox="0 0 12 12"><circle cx="5" cy="6" r="3.500" fill="none" stroke="#333" /><circle cx="7" cy="6" r="3.500" fill="none" stroke="#333" /></svg></button><small>MONO</small>
              <button class="m">M</button><button class="s">S</button>
              <button class="rt a" aria-label="route" /><small>ROUTE</small>
              <button class="fxx">FX</button><button class="g pw2" aria-label="power"><svg><use href="#power" /></svg></button>
              <button class="g tr" aria-label="trim"><svg><use href="#env" /></svg></button><small>TRIM</small>
              <button class="in">i</button>
            </div>
          </div>
          <div class="ch">
            <div class="chh">
              <button class="inp"><span>Input 1</span><i>▼</i></button>
              <div class="l2"><button class="inp sm"><span>in</span><i>▼</i></button><button class="infx">IN<br>FX</button></div>
              <i class="kn" />
            </div>
            <div class="chb">
              <div class="cm"><b>+15.9</b><i /><svg viewBox="0 0 10 16"><path d="M1 5h3l5-5v16L4 11H1z" fill="#888" /></svg></div>
              <div class="cf"><div class="fad"><i /></div><i class="rec" /></div>
              <div class="cb">
                <button class="m">M</button><button class="s">S</button><button class="rt" aria-label="route" />
                <button class="fxx gr">FX</button><button class="pw2 gr2" aria-label="power"><svg><use href="#power" /></svg></button>
                <button class="g tr" aria-label="trim"><svg><use href="#env" /></svg></button><button class="g ph0">Ø</button>
              </div>
              <span class="cn">Process</span>
            </div>
            <div class="chn">1</div>
          </div>
        </div>
      </div>
      <div class="docks"><span>!</span><a href="#" class="on"><i>☒</i>Mixer</a><a href="#"><i>☒</i>Performance</a><a href="#"><i>☒</i>Routing Matrix</a></div>
      <div class="taskbar bar-r">
        <button v-for="a in apps" :key="a" :class="[a, appState[a]]" :aria-label="a"><svg><use :href="'#' + a" /></svg><b v-if="a === 'cal'">31</b></button>
        <div class="tray">
          <svg class="i13 flip"><use href="#chev" /></svg>
          <svg viewBox="0 0 16 16"><path d="M3 2h10v12H3z" fill="#0a78d4" /><path d="M5 5l6 6-3 3V2l3 3-6 6" stroke="#fff" fill="none" /></svg>
          <svg viewBox="0 0 16 16"><path d="M1 5h13v7H1zM4 2v3M3 7v3" stroke="#fff" fill="none" /></svg>
          <svg viewBox="0 0 16 16"><path d="M1 6h3l4-4v12l-4-4H1zM10 6l5 5M15 6l-5 5" stroke="#fff" fill="none" /></svg>
          <svg viewBox="0 0 16 16"><circle cx="8" cy="8" r="6.500" stroke="#fff" fill="none" /><path d="M1 8h14M8 1q-6 7 0 14M8 1q6 7 0 14" stroke="#fff" fill="none" /></svg>
          <svg viewBox="0 0 16 16"><path d="M2 3h10v8H2zM5 14h5M9 7h6v7H9z" stroke="#fff" fill="none" /></svg>
          <span class="eng">ENG</span><span class="tm2">11:45</span>
          <svg viewBox="0 0 16 16"><path d="M1 2h14v10H8l-3 3v-3H1z" fill="#fff" /></svg>
        </div>
      </div>

      <article class="fxw">
        <header><svg class="pin" viewBox="0 0 14 16"><path d="M3 1h8M5 1v7M9 1v7M2 9h10M7 9v6" fill="none" stroke="#888" /></svg><b>×</b></header>
        <div class="fxb">
          <div class="fxl"><span>0.6%c/0.6%c 0/0 spls</span></div>
          <div class="fxr">
            <div class="f1"><input aria-label="Comment"><button>...</button></div>
            <div class="f2"><span class="sel"><select aria-label="Preset"><option /></select></span><button class="pl1">+</button><button class="pr">Param</button><button class="io">64 in+out</button><button class="ui">UI</button><i class="kn" /><input type="checkbox" checked aria-label="Enabled"></div>
            <div class="plug">
              <div class="phd"><b>A|</b><strong>MCFX-6DoFconv</strong><span>6DoF Convolver with the MCFX convolution engine</span><em>Ver 1.0.0alpha, Build Date Nov 21 2024 17:26:29</em></div>
              <div class="pbd">
                <div class="pc">
                  <h4 class="ds">dataset <small>SOFA file loaded</small></h4>
                  <div class="box b1">
                    <div class="pth"><span>arina-proj\MATRICES(hrtf-and-SOFA)\SOFA\creat...</span><svg class="i18"><use href="#chev" /></svg><b>...</b></div>
                    <div class="cols">
                      <div class="ca"><div v-for="[a, b] in sofaRows" :key="a"><b>{{ a }}</b><span>{{ b }}</span></div></div>
                      <div class="cc"><div v-for="[a, b] in irRows" :key="a" class="ir"><b>{{ a }}</b><span>{{ b }}</span></div>
                        <div class="parts"><label>1st Partition Size:<span class="jsel"><select><option>1024</option></select></span></label><label>Max Partition Size:<span class="jsel off"><select disabled><option>8192</option></select></span></label></div></div>
                    </div>
                  </div>
                  <div class="box b2"><div class="xyz"><b>x</b><b>y</b><b>z</b></div><div class="vals"><span>1.5</span><span>-1.0</span><span>1.6</span></div></div>
                  <h4 class="tl2">Target Listener Position [m]</h4>
                  <div class="box b3">
                    <div class="b3a"><div class="xyz"><b>x</b><b>y</b><b>z</b></div><div class="vals"><span>0.000</span><span class="act">0.219</span><span class="hot">1.000</span></div></div>
                    <div class="b3b"><b>Index</b><span>1</span></div><div class="b3c"><b>OSC Port</b><span>9000</span></div>
                  </div>
                  <div class="box b4"><b>e Time [ms]:</b><span>21.3</span></div>
                  <h4 class="sf">bisonic Sound-Field Rotation [degrees]</h4>
                  <div class="box b5">
                    <div class="en"><b>e Rotation</b><i>✓</i><p>t this rotation is<br>ble if you have<br>mbisonic IRs)</p></div>
                    <div class="dials"><div v-for="[a, b] in rot" :key="a"><h5>{{ a }}<small>{{ b }}</small></h5>
                      <svg viewBox="0 0 60 54"><path d="M30 30V2A28 28 0 0 0 14 53z" fill="#b0b4b5" /><path d="M30 30L46 53A28 28 0 1 0 14 53z" fill="none" stroke="#c4c8c9" stroke-width="1.500" stroke-linejoin="round" /></svg>
                      <span>0.00</span><p>+/- <i /></p></div></div>
                  </div>
                </div>
                <div class="pv">
                  <div class="pvh"><h4>Coordinate View [m]</h4><span class="side">Side View <svg class="i18"><use href="#chev" /></svg></span></div>
                  <div class="box view">
                    <svg viewBox="0 0 420 90" width="420" height="90">
                      <path v-for="n in 14" :key="n" :d="`M${12 + n * 23.4} 14v40`" stroke="#3a474c" /><path d="M12 30h350" stroke="#2c3a40" /><path d="M129 14v40M246 14v40" stroke="#8a9396" />
                      <rect x="12" y="13" width="350" height="41" fill="none" stroke="#e4e6e6" stroke-width="2" />
                      <circle cx="46" cy="37" r="6" fill="#134a50" stroke="#2e6a70" /><circle cx="397" cy="37" r="6" fill="#134a50" stroke="#2e6a70" />
                      <circle cx="209" cy="37" r="6" fill="#ffa500" /><circle cx="222" cy="37" r="8" fill="#0a870a" stroke="#9c9" /><circle cx="280" cy="31" r="6" fill="#f0f" />
                      <text x="229" y="31" class="one">1</text><text x="392" y="38">Z</text><text x="370" y="59">1.2</text>
                      <text x="8" y="71">3.6</text><text x="125" y="71">1.6</text><text x="239" y="71">-0.4</text><text x="356" y="71">-2.4</text><text x="199" y="87">Y</text>
                    </svg>
                  </div>
                </div>
              </div>
            </div>
          </div>
        </div>
      </article>

      <article class="pm">
        <header><span>Parameter Modulation/Link for receiver_coordinate_y / sparta_...</span><button aria-label="Close">×</button></header>
        <div class="pmb">
          <label class="ck"><input type="checkbox">Enable parameter modulation, baseline value (envelope overrides):</label>
          <span class="rg full"><input type="range" value="50" aria-label="Baseline"><i :style="{ left: '50%' }" /></span>
          <div class="out">Output:<span class="bar"><i :style="{ width: '53%' }" /></span></div>
          <label class="ck au"><input type="checkbox">Audio control signal (sidechain)</label>
          <fieldset class="lfo">
            <legend><label class="ck"><input type="checkbox" checked>LFO</label></legend>
            <div class="row sh"><label for="shape">Shape:</label><span class="sel"><select id="shape"><option>triangle</option></select></span><label class="ck"><input type="checkbox">Tempo sync</label><button>Learn phase</button></div>
            <div v-for="r in lfo" :key="r.n" class="row sl"><label :for="r.n">{{ r.n }}</label><span class="rg"><input :id="r.n" type="range" :value="r.v"><i :style="{ left: r.m + '%' }" /></span><input class="tx" :value="r.t" :aria-label="r.n"><span class="un">{{ r.u }}</span></div>
            <div class="row di"><span>Direction:</span><label><input type="radio" name="d">Negative</label><label><input type="radio" name="d" checked>Centered</label><label><input type="radio" name="d">Positive</label></div>
            <div class="row pr2"><label for="preset">Phase reset:</label><span class="sel"><select id="preset"><option>On seek/loop (deterministic output)</option></select></span></div>
            <span class="bar b2b"><i :style="{ width: '33%' }" /></span>
          </fieldset>
          <label class="ck"><input type="checkbox">Link from MIDI or FX parameter</label>
        </div>
      </article>

      <article class="rd">
        <header><svg class="i18"><use href="#reaper" /></svg><span>Render to File</span><svg class="cl"><use href="#x" /></svg></header>
        <div class="rdb">
          <div class="src"><label for="source">Source:</label><span class="sel"><select id="source"><option>Master mix</option></select></span><label for="bounds">Bounds:</label><span class="sel bo"><select id="bounds"><option>Entire project</option></select></span><button>Presets</button></div>
          <fieldset class="tb"><legend>Time bounds</legend>
            <label for="st" class="off">Start:</label><input id="st" disabled value="0:00.000"><label for="en" class="off">End:</label><input id="en" disabled value="0:30.000"><label for="le" class="off">Length:</label><input id="le" disabled value="0:30.000">
            <label class="ck tail"><input type="checkbox">Tail:</label><input class="ms1" disabled value="1000" aria-label="Tail ms"><span>ms</span></fieldset>
          <fieldset class="op"><legend>Output</legend>
            <div v-for="([a, b, c], i) in paths" :key="a"><label :for="'o' + i">{{ a }}</label><input :id="'o' + i" :value="b" :readonly="i === 2"><button :disabled="i === 2">{{ c }}</button></div></fieldset>
          <fieldset class="os"><legend>Options</legend>
            <div class="o1"><label for="sr">Sample rate:</label><span class="sel wh"><select id="sr"><option>48000</option></select></span><span>Hz</span><label for="chn">Channels:</label><span class="sel wh"><select id="chn"><option>64</option></select></span><span class="sel"><select aria-label="Speed"><option>Full-speed Offline</option></select></span></div>
            <div class="o2"><label class="ck off"><input type="checkbox" checked disabled>Use project sample rate for mixing and FX processing</label><label class="ck"><input type="checkbox">2nd pass render</label></div>
            <div class="o3"><label for="rs">Resample mode:</label><span class="sel"><select id="rs"><option>Point Sampling (lowest quality, retro)</option></select></span><button>Normalize/Limit/Fade</button></div>
            <div class="o4"><label class="ck off"><input type="checkbox" disabled>Tracks with only mono media to mono files</label><label class="ck"><input type="checkbox">Dither master</label><label class="ck off"><input type="checkbox" disabled>Dither stems</label></div>
            <div class="o4 o4b"><label class="ck off"><input type="checkbox" disabled>Multichannel tracks to multichannel files</label><label class="ck"><input type="checkbox">Noise shape master</label><label class="ck off"><input type="checkbox" disabled>Noise shape stems</label></div>
            <div class="o5"><label class="ck off"><input type="checkbox" disabled>Only render channels that are sent to parent</label><label class="ck off"><input type="checkbox" disabled>Embed stretch markers</label></div>
            <div class="o5 o5b"><label class="ck off"><input type="checkbox" disabled>Render stems pre-fader</label><label class="ck off"><input type="checkbox" disabled>Embed take markers</label></div>
            <div class="o5 o5c"><label class="ck off"><input type="checkbox" disabled>Preserve source media metadata if possible</label><label class="ck"><input type="checkbox">Add new metadata</label><button disabled>Metadata...</button></div>
          </fieldset>
          <div class="tabs"><button class="on">Primary output format</button><button>Secondary output format</button></div>
          <div class="fmt">
            <div class="g1"><label for="fm">Format:</label><span class="sel"><select id="fm"><option>WAV</option></select></span></div>
            <div class="g2"><label for="bd">WAV bit depth:</label><span class="sel"><select id="bd"><option>24 bit PCM</option></select></span><label for="lf">Large files:</label><span class="sel"><select id="lf"><option>Auto WAV/RF64</option></select></span></div>
            <div class="g3"><label class="ck"><input type="checkbox" checked>Write BWF ('bext') chunk</label><label class="ck"><input type="checkbox">Include project filename in BWF data</label></div>
            <div class="g4"><span class="sel"><select aria-label="Markers"><option>Do not include markers or regions</option></select></span><label class="ck"><input type="checkbox">Embed tempo</label></div>
          </div>
          <div class="last2">
            <div><label class="ck"><input type="checkbox">Silently increment filenames to avoid overwriting</label><label class="ck"><input type="checkbox" checked>Do not render files that are likely silent</label></div>
            <div><label class="ck"><input type="checkbox">Add rendered items to new tracks in project</label><label class="ck"><input type="checkbox">Save copy of project to outfile.wav.RPP</label><label class="ck"><input type="checkbox">Save outfile.render_stats.html</label></div>
          </div>
          <div class="acts"><button>Queued Renders...</button><button class="dry">Dry Run (no output)</button><button>Render 1 file</button></div>
          <div class="acts a2"><button class="cn2">Cancel</button><button class="sv" disabled>Save Settings</button></div>
        </div>
      </article>
    </section>
  </main>
</template>

<style>
body { margin: 0; background: #000; }
</style>

<style scoped>
* { box-sizing: border-box; margin: 0; }
ul { padding: 0; list-style: none; }
a { color: inherit; text-decoration: none; }
i { font-style: normal; }
svg { display: block; flex: none; }
button, input, select { font: inherit; color: inherit; padding: 0; border: 0; background: none; border-radius: 0; }
table { border-collapse: collapse; }
fieldset { min-width: 0; padding: 0; border: 1px solid #dcdcdc; }
.defs { position: absolute; }
.desk { display: grid; grid-template-columns: 3fr 4fr; min-height: 100vh; font: 13px/18px "Open Sans", "Noto Sans", sans-serif; background: #000; overflow: hidden; }
.left, .right { position: relative; display: flex; flex-direction: column; min-width: 0; overflow: hidden; white-space: nowrap; }
.i14 { width: 14px; height: 16px; } .i16 { width: 16px; height: 16px; } .i10 { width: 10px; height: 10px; } .i13 { width: 13px; height: 13px; } .i18 { width: 18px; height: 18px; }
.flip { transform: rotate(180deg); }
.wbtns { display: flex; gap: 42px; margin-left: auto; align-items: center; color: #888; }
.wbtns svg { width: 12px; height: 12px; }

.void { height: 211px; }
.ex-title { height: 27px; display: flex; align-items: center; background: #2b2b2b; color: #8f8f8f; }
.ex-title .wbtns { margin-right: 23px; }
.vsep { width: 2px; height: 18px; background: #555; margin-left: 10px; }
.gapl { margin-left: 12px; } .gaps { margin: 0 10px 0 8px; } .ex-title .i10 { color: #fff; }
.manage { align-self: stretch; width: 100px; margin-left: 143px; background: #edf084; color: #222; text-align: center; font-size: 12px; line-height: 26px; }
.ex-name { margin-left: 12px; }
.ribbon { height: 25px; display: flex; background: #000; color: #fff; font-size: 11px; line-height: 25px; }
.ribbon a { margin-left: 32px; } .ribbon .file { width: 64px; margin: 0 -16px 0 0; text-align: center; background: #0063b1; }
.ribbon .pt { margin-left: 18px; width: 100px; text-align: center; border: solid #222; border-width: 0 1px; }
.rend { margin-left: auto; display: flex; align-items: center; gap: 10px; padding-right: 4px; }
.rend b { width: 18px; height: 18px; border-radius: 50%; background: #0a6ed1; line-height: 18px; text-align: center; }
.addr { height: 44px; border-bottom: 3px solid #fff; background: #191919; display: flex; align-items: center; padding: 0 11px 0 14px; }
.arr { width: 14px; height: 14px; fill: none; stroke: #fff; stroke-width: 2; } .arr.dim { margin-left: 22px; stroke: #777; }
.rc { margin-left: 15px; color: #ddd; } .arr.up { margin: 0 9px 0 12px; height: 17px; }
.path { flex: 1; height: 25px; border: 1px solid #535353; display: flex; align-items: center; padding-left: 3px; color: #fff; }
.path i { width: 6px; margin: 0 8px 3px 12px; color: #999; font-size: 16px; }
.path i ~ i { margin: 0 8px 3px 11px; }
.pd { margin-left: auto; color: #aaa; } .rf { width: 14px; height: 14px; margin: 0 2px 0 9px; fill: none; stroke: #aaa; stroke-width: 2; }
.search { width: 373px; height: 25px; margin-left: 11px; border: 1px solid #535353; display: flex; align-items: center; padding: 0 9px 0 8px; }
.search input { flex: 1; outline: 0; } .search input::placeholder { color: #7d7d7d; opacity: 1; }
.search svg { width: 14px; height: 14px; fill: none; stroke: #bbb; stroke-width: 2; }
.ex-body { height: 940px; display: flex; background: #202020; color: #e4e4e4; }
.ex-body aside { position: relative; width: 204px; background: #191919; border-right: 1px solid #2d2d2d; padding-top: 19px; }
.ex-body aside ul { display: grid; grid-auto-rows: 1fr; height: 603px; } .ex-body aside .p { height: 301px; margin-top: 10px; }
.ex-body li { display: flex; align-items: center; padding-left: 42px; gap: 4px; width: 183px; overflow: hidden; }
.ex-body li svg { width: 16px; height: 16px; margin-left: -2px; } .ex-body li.top { padding-left: 32px; }
.ex-body li.sel2 { background: #333; }
.more { position: absolute; right: 8px; bottom: 6px; color: #999; }
.list { flex: 1; display: flex; flex-direction: column; justify-content: flex-end; overflow: hidden; }
.list table { width: 100%; margin-bottom: -11px; table-layout: fixed; } .list tr { height: 25px; } .list td { padding: 0; color: #dedede; }
.c1 { width: 508px; } .c1 svg { display: inline-block; width: 18px; height: 16px; margin: 0 5px 0 23px; vertical-align: -3px; } .c2 { width: 182px; } .c3 { width: 120px; } .c4 { width: 94px; text-align: right; } .c2, .c3, .c4 { font-size: 12px; }
.vbar { width: 18px; background: #171717; display: flex; flex-direction: column; align-items: center; padding: 5px 0; color: #888; margin-right: 1px; }
.vbar i { width: 18px; height: 140px; background: #4d4d4d; margin: 4px 0 auto; }
.status { height: 27px; display: flex; align-items: center; background: #333; color: #ccc; padding-left: 16px; }
.status > i { width: 1px; height: 12px; background: #fff; margin: 0 12px 0 11px; } .status > span + span { margin-left: 8px; }
.views { margin-left: auto; display: flex; gap: 5px; align-items: center; margin-right: 9px; } .views b { width: 25px; height: 27px; background: #666; border: 1px solid #888; padding: 3px 3px; } .views b svg { width: 18px; height: 20px; }
.taskbar { display: flex; background: #101010; color: #fff; font-size: 12px; } .bar-l { height: 35px; } .strip { height: 8px; }
.taskbar button { position: relative; width: 42px; display: grid; place-items: center; border-bottom: 2px solid transparent; } .taskbar button.win { width: 41px; } .taskbar button.taskview { width: 44px; }
.taskbar button svg { width: 19px; height: 19px; } .taskbar button b { position: absolute; inset: 0; font: 8px/33px Roboto, sans-serif; color: #2b7de9; text-align: center; }
.taskbar .open { background: linear-gradient(#76b9ed, #76b9ed) bottom / 32px 2px no-repeat; border: 0; } .taskbar .active { background: linear-gradient(#76b9ed, #76b9ed) bottom / 42px 2px no-repeat, #333; }
.clock { margin: auto 7px auto auto; }

.tm { position: absolute; left: 141px; right: 147px; top: 312px; background: #fff; color: #000; box-shadow: 0 0 12px #000a; }
.tm > header { height: 35px; display: flex; align-items: center; padding: 0 20px 0 8px; color: #999; gap: 6px; } .tm > header .wbtns { color: #999; gap: 41px; padding-right: 1px; }
.tm-menu { height: 22px; padding-left: 6px; display: flex; gap: 14px; color: #6d6d6d; border-bottom: 2px solid #f0f0f0; }
.tm-menu a { line-height: 22px; margin-top: -1px; }
.tm-tabs { height: 28px; display: flex; align-items: flex-end; padding-left: 2px; border-bottom: 1px solid #d9d9d9; font-size: 12px; }
.tm-tabs button { height: 24px; padding: 0 5px; margin-bottom: -1px; background: #f0f0f0; border: 1px solid #d9d9d9; border-left-width: 0; flex: none; width: 79px; }
.tm-tabs button:first-child { width: 67px; border-left-width: 1px; } .tm-tabs button.on { height: 26px; width: 90px; background: #fff; border-bottom-color: #fff; }
.tm-tabs button:nth-child(4) { width: 55px; } .tm-tabs button:nth-child(5) { width: 43px; } .tm-tabs button:nth-child(6) { width: 53px; } .tm-tabs button:nth-child(7) { width: 57px; }
.tm-body { height: 656px; display: flex; }
.devs { width: 241px; padding: 15px 4px 0 5px; }
.dev { display: flex; gap: 12px; height: 68px; padding: 11px 0 0 11px; white-space: pre; } .dev.tall { height: 80px; } .dev.on { background: #d9d9d9; }
.dev svg { width: 69px; height: 45px; border: 1px solid currentColor; background: #fff; } .dev.tall svg { height: 56px; }
.dev h3 { font: inherit; font-size: 17px; line-height: 22px; } .dev p { line-height: 18px; } .dev em, dt, .spec th { font-style: normal; color: #707070; } .dev div { margin-top: -1px; overflow: hidden; }
.perf { flex: 1; margin: 27px 0 2px; border-left: 1px solid #d4d4d4; padding: 0 31px 0 33px; }
.ph { display: flex; justify-content: space-between; align-items: center; height: 30px; } .ph h1 { font: inherit; font-size: 30px; line-height: 30px; margin-left: -5px; } .ph span { font-size: 17px; margin: 12px -3px 0 0; }
.pl { display: flex; justify-content: space-between; font-size: 11px; line-height: 16px; padding-top: 11px; color: #707070; height: 30px; }
.graphs { display: grid; grid-template-columns: repeat(4, 1fr); grid-auto-rows: 110px; gap: 6px; } .graphs svg { width: 100%; height: 110px; border: 1px solid #117dbb; }
.gl { stroke: #d9eaf4; fill: none; } .gu { fill: #117dbb; fill-opacity: .07; } .gk { fill: #117dbb; fill-opacity: .1; } .lu { fill: none; stroke: #117dbb; } .lk { fill: none; stroke: #7fb4d2; stroke-dasharray: 3 1; }
.pstats { display: flex; padding-top: 32px; } .big { width: 232px; margin-left: -3px; } .big > div { display: flex; height: 59px; } dd { margin: 3px 0 0; font-size: 21px; line-height: 28px; } .big dl:first-child { width: 86px; } .r1 dl:first-child { width: 81px; } .r1 dl:nth-child(2) { width: 70px; }
.spec { height: 176px; margin: -2px 0 0 3px; align-self: flex-start; } .spec th { font-weight: 400; text-align: left; width: 130px; padding: 0; } .spec td { padding: 0; } .spec tr { height: 22px; }
.tm > footer { height: 58px; display: flex; align-items: center; padding-left: 9px; } .cir { width: 22px; height: 22px; fill: none; stroke: #999; margin-right: 7px; } .tm footer i { width: 1px; height: 12px; background: #ccc; margin: 0 9px; } .rm { width: 18px; height: 18px; margin-right: 6px; } .tm footer a { color: #0066cc; }

.right { background: #333; color: #999; }
.rp-title { height: 27px; display: flex; align-items: center; gap: 5px; padding: 0 24px 0 2px; background: #fff; } .rp-title .wbtns { gap: 42px; }
.rp-menu { height: 23px; background: #fff; border-bottom: 1px solid #ddd; color: #6d6d6d; display: flex; gap: 13px; padding: 0 7px 0 6px; line-height: 22px; } .last { margin-left: 12px; } .audio { margin-left: auto; }
.work { height: 860px; display: flex; }
.tcp { width: 698px; height: 858px; border-bottom: 1px solid #5a5a5a; }
.tools { height: 125px; padding: 48px 0 0 2px; display: flex; color: #848c89; } .tools button { width: 26px; height: 26px; margin-right: 1px; display: grid; place-items: center; } .tools svg { width: 20px; height: 20px; } .tools .on { background: #2e4d47; color: #1abc98; }
.marq { width: 18px; height: 18px; border: 1px dashed #999; background: #555; margin: 4px 20px 0 21px; } .tools .rz { margin-left: 16px; }
.track { height: 146px; display: flex; background: #262626; width: 688px; margin-left: 2px; } .tnum { flex: none; width: 18px; background: #828b88; color: #eee; font-size: 11px; line-height: 146px; padding-left: 4px; border-right: 1px solid #444; }
.tmain { flex: none; width: 583px; } .thead { height: 29px; background: #828b88; display: flex; align-items: flex-start; padding: 4px 5px; font-size: 11px; }
.pill { width: 147px; height: 22px; border-radius: 11px; background: #202020; display: flex; align-items: center; color: #ddd; font-size: 12px; margin-right: 5px; } .rec { width: 19px; height: 20px; border-radius: 50%; border: 2px solid #9c4a50; background: radial-gradient(#5a2a30 20%, #b8747a 22%, #b8747a 40%, #8a3c44 42%); } .pill span { margin: 0 auto 0 8px; } .knob, .kn { width: 19px; height: 20px; border-radius: 50%; background: linear-gradient(100deg, #eee, #777); border: 1px solid #222; }
.ms, .fx { display: flex; height: 19px; margin-top: 1px; } .ms button { width: 17px; margin-right: 1px; background: #2c2c2c; } .m { color: #d05050; } .s { color: #d8c050; } .fx { margin-left: 5px; } .fx button { width: 18px; background: #267a5c; color: #4fe0a8; } .fx .pw { width: 16px; background: #3fc794; color: #14553c; padding: 3px; } .fx svg { width: 10px; height: 12px; }
.trim { height: 19px; width: 37px; margin: 1px 0 0 5px; color: #444; font: 9px/18px "Liberation Sans", sans-serif; display: flex; align-items: center; } .thead .trim { background: #a0a6a4; border: 1px solid #666; } .trim svg { width: 11px; height: 11px; }
.param { display: flex; margin: 6px 0 0 7px; font-size: 10px; line-height: 10px; color: #111; } .param i { width: 18px; height: 20px; border-radius: 50%; background: #35997f; border: 4px solid #181818; outline: 1px solid #999; outline-offset: -2px; margin-right: -2px; } .param div { width: 67px; overflow: hidden; } .param span, .param b { display: block; background: #939393; font-weight: 400; padding-left: 6px; } .param b { background: #2f9a80; }
.dots { padding: 8px 0 0 12px; } .dots i { display: block; width: 8px; height: 8px; border-radius: 50%; background: #888; margin-bottom: 14px; box-shadow: -2px 8px 0 -2px #555; }
.tfx { flex: none; width: 66px; padding: 6px 0 0 6px; font-size: 10px; } .tfx span { display: block; width: 57px; height: 14px; line-height: 14px; background: #939393; color: #222; border-radius: 2px; text-align: center; }
.tmeter { margin-left: auto; width: 16px; border-right: 2px solid #f00552; display: flex; flex-direction: column; justify-content: space-between; padding-top: 2px; } .tmeter i { height: 58px; background: #403620; }
.arr-pane { position: relative; flex: 1; min-width: 0; padding: 24px 20px 0 0; display: grid; grid-template: "r" 22px "." 38px "u" 42px "l" 733px / 1fr; align-content: start; }
.region { grid-area: r; background: #3b3b3b; margin-right: -20px; } .region b { display: block; width: 16px; height: 16px; margin: 3px 0 0 9px; border-radius: 6px; border: 1px solid #d66; background: #a00; color: #eee; font-size: 11px; line-height: 14px; text-align: center; font-weight: 400; }
.ruler { grid-area: u; width: 100%; overflow: visible; } .t1 { font-size: 13px; fill: #8c8c8c; } .t2 { font-size: 11px; fill: #8c8c8c; } .it { font-size: 11px; fill: #ddd; } .lanes { grid-area: l; width: 100%; height: 733px; background: #404040; }
.cursor { position: absolute; left: 10px; top: 40px; bottom: 2px; width: 1px; background: #c00; } .play { position: absolute; left: 169px; top: 72px; bottom: 2px; width: 1px; background: #2c8f7a; } .play::before { content: ""; position: absolute; left: -7px; border: 7px solid transparent; border-top: 9px solid #1f7a68; }
.vs { position: absolute; right: 4px; top: 127px; bottom: 5px; width: 14px; display: flex; flex-direction: column; align-items: center; } .vs b, .hs b { width: 14px; height: 14px; border-radius: 50%; background: #111; color: #999; font: 7px/13px "DejaVu Sans", sans-serif; text-align: center; } .vs i { flex: 1; width: 12px; margin: 6px 0; border-radius: 6px; background: #606060; }
.hs { position: absolute; left: 0; right: 20px; top: 860px; height: 14px; display: flex; gap: 6px; padding-left: 2px; } .hs i { flex: 1; background: #606060; border-radius: 6px; }

.mixer { height: 355px; font-size: 11px; } .mx-l { height: 23px; padding-left: 2px; line-height: 16px; font-size: 12px; } .strips { display: flex; height: 332px; }
.master { width: 121px; display: flex; padding-left: 5px; } .mcol { width: 87px; display: flex; flex-direction: column; align-items: center; } .ctr { color: #ddd; line-height: 16px; margin-right: 8px; padding-top: 1px; } .mcol .kn { margin: 0 7px 4px 0; } .mbox { width: 86px; flex: 1; background: #262626; display: flex; flex-direction: column; }
.db { text-align: center; line-height: 18px; } .meters { position: relative; height: 240px; display: flex; } .sc { width: 16px; padding-top: 20px; height: 238px; display: flex; flex-direction: column; font: bold 9px/21px "Liberation Sans", sans-serif; color: #666; } .sc.r { text-align: right; width: 16px; }
.mt { width: 32px; background: #403620; } .mt i { display: block; height: 22px; background: #ff0052; } .mt ul { padding-top: 11px; font: bold 9px/21px "Liberation Sans", sans-serif; color: #776c50; text-align: center; }
.fad { width: 18px; margin-left: 2px; background: linear-gradient(#000, #000) center / 2px 100% no-repeat; } .fad i { display: block; width: 18px; height: 38px; margin-top: 54px; border-radius: 5px; background: linear-gradient(#ccc 0 6px, #eee 6px 8px, #3e4f4a 8px 18px, #111 18px 20px, #8b7681 20px 30px, #fff 30px 32px, #6b4d58 32px); border: 1px solid #111; }
.pk { position: absolute; top: 4px; left: 4px; display: flex; gap: 7px; font: bold 9px/16px "Liberation Sans", sans-serif; color: #aaa; } .rms { display: flex; gap: 9px; padding-left: 6px; font: bold 9px/18px "Liberation Sans", sans-serif; color: #2f9a70; } .mn { text-align: center; color: #ccc; line-height: 14px; }
.mbt { width: 20px; margin-left: 4px; padding-top: 5px; display: flex; flex-direction: column; align-items: center; } .mbt button, .cb button { width: 18px; height: 18px; background: #262626; border: 1px solid #111; font-size: 10px; line-height: 15px; display: grid; place-items: center; flex: none; } .mbt small { font: bold 7px/12px "Liberation Sans", sans-serif; color: #aaa; margin-bottom: 3px; } .mbt button.g, .cb button.g { background: #7b7f7e; color: #333; } .mbt svg, .cb svg { width: 11px; height: 11px; }
button.rt { background: linear-gradient(105deg, #1abc98 0 35%, #222 36% 42%, #5d5530 43% 62%, #222 63% 68%, #2d4658 69%) !important; } button.rt.a { margin-top: 6px; background: linear-gradient(105deg, #1abc98 0 35%, #222 36% 42%, #f4e000 43% 62%, #222 63% 68%, #2d4658 69%) !important; } .fxx { color: #ddd; } .mbt .tr { margin-top: 3px; } .in { color: #ddd; font-weight: 700; margin-top: 2px; }
.ch { width: 194px; display: flex; flex-direction: column; } .chh { height: 73px; background: #828b88; padding: 5px 5px 0; } .inp { width: 100%; height: 19px; background: #616867; color: #ddd; display: flex; justify-content: space-between; align-items: center; padding: 0 2px 0 5px; border-radius: 2px 9px 9px 2px; } .inp i { width: 15px; height: 15px; border-radius: 50%; background: #858c8a; font: 8px/15px "DejaVu Sans", sans-serif; } .inp.sm { width: 37px; } .l2 { display: flex; justify-content: space-between; margin-top: 4px; } .infx { width: 18px; height: 19px; background: #747b79; border: 1px solid #555; color: #333; font: bold 7px/8px "Liberation Sans", sans-serif; } .chh .kn { display: block; margin: 0 auto; }
.chb { position: relative; height: 242px; background: #262626; display: flex; padding: 5px 5px 0 3px; } .cm { width: 136px; } .cm b { display: block; height: 18px; background: #ff0052; color: #ddd; font: bold 9px/18px "Liberation Sans", sans-serif; text-align: center; } .cm i { display: block; height: 169px; width: 118px; margin-left: 9px; background: #403620; } .cm svg { width: 9px; height: 14px; margin: 6px auto 0; } .cf { width: 20px; margin-left: 4px; } .cf .fad { height: 170px; margin: 9px 0 0; padding-top: 34px; } .cf .fad i { margin: 0; } .cf .rec { display: block; margin-top: 11px; } .cb { margin-left: auto; padding-top: 1px; } .cb .rt { margin-top: 5px; } .cb .fxx { margin-top: 7px; } .cb .fxx.gr { background: #267a5c; color: #4fe0a8; } .cb .gr2 { background: #3fc794; color: #14553c; } .cb .tr { margin-top: 6px; } .cb .ph0 { width: 14px; height: 14px; border-radius: 50%; margin: 8px auto 0; } .cn { position: absolute; left: 0; right: 0; bottom: 2px; text-align: center; color: #ddd; font-size: 12px; } .chn { height: 18px; background: #828b88; color: #ddd; text-align: center; }
.docks { height: 17px; background: #3c3c3c; display: flex; line-height: 17px; font-family: "Liberation Sans", sans-serif; font-size: 12px; color: #8a9a94; } .docks span { width: 12px; padding-left: 4px; color: #fff; } .docks a { background: #2b2b2b; padding: 0 12px 0 5px; clip-path: polygon(0 0, 100% 0, calc(100% - 8px) 100%, 4px 100%); width: 104px; } .docks a.on { width: 66px; background: #828b88; color: #222; font-weight: 700; } .docks a:last-child { width: 116px; } .docks i { font-family: "DejaVu Sans", sans-serif; font-weight: 400; margin-right: 3px; }
.bar-r { height: 35px; } .tray { margin-left: auto; display: flex; align-items: center; gap: 11px; padding-right: 26px; } .tray svg { width: 16px; height: 16px; } .tray .eng { margin-left: 8px; } .tm2 { margin: 0 21px 0 3px; }

.pm, .rd, .fxw { position: absolute; color: #000; background: #f0f0f0; box-shadow: 0 2px 10px #0009; font: 12px/16px "Liberation Sans", Arial, sans-serif; }
.ck { display: flex; align-items: center; gap: 3px; } .off { color: #838383; }
input[type=checkbox], input[type=radio] { appearance: none; width: 14px; height: 14px; border: 1px solid #333; background: #fff; flex: none; position: relative; margin: 0; } input[type=radio] { border-radius: 50%; margin-right: 4px; }
input[type=checkbox]:checked::after { content: ""; position: absolute; left: 4px; top: 1px; width: 4px; height: 7px; border: solid currentColor; border-width: 0 1px 1px 0; transform: rotate(40deg); } input[type=radio]:checked { background: radial-gradient(#333 4px, #fff 5px); } input[type=checkbox]:disabled { border-color: #ccc; }
.sel { position: relative; display: block; } .sel select { appearance: none; width: 100%; height: 22px; border: 1px solid #adadad; background: #e1e1e1; padding: 0 3px; display: block; color: #000; } .sel::after { content: ""; position: absolute; right: 8px; top: 6px; width: 6px; height: 6px; border: solid #444; border-width: 0 1px 1px 0; transform: rotate(45deg); pointer-events: none; } .sel.wh select { background: #fff; border-color: #666; }
.pmb button, .rdb button, .f1 button, .f2 button { background: #e1e1e1; border: 1px solid #adadad; text-align: center; } .rdb button:disabled { background: #ccc; border-color: #bfbfbf; color: #838383; }
.pm { left: 271px; top: 317px; width: 415px; height: 402px; } .pm > header { height: 28px; background: #fff; display: flex; justify-content: space-between; align-items: center; padding: 0 1px 0 3px; font: 12px/20px "Open Sans", sans-serif; } .pm header button { flex: none; width: 23px; height: 23px; background: #c75050; color: #fff; font-size: 14px; line-height: 20px; }
.pmb { padding: 13px 4px 0 9px; } .pmb > .ck { margin-left: 6px; } .rg { position: relative; isolation: isolate; display: block; height: 23px; border-radius: 12px; background: linear-gradient(#5a5a5a, #5a5a5a) center / calc(100% - 16px) 5px no-repeat, #cacaca; } .rg.full { margin: 5px 0 0 6px; } .rg input { position: relative; z-index: 1; appearance: none; width: calc(100% - 4px); margin: 2px; height: 19px; display: block; } .rg input::-webkit-slider-thumb { appearance: none; width: 18px; height: 19px; border-radius: 8px; border: 2px solid #444; background: linear-gradient(90deg, #888, #e6e6e6 45%, #b8a8b0 60%, #777); } .rg i { position: absolute; top: 1px; width: 1px; height: 21px; background: #000; }
.out { display: flex; justify-content: space-between; height: 16px; margin: 9px 0 0 6px; } .bar { display: block; height: 12px; width: 346px; border: 1px solid #b8b8b8; background: #e6e6e6; margin-top: 4px; } .bar i { display: block; height: 100%; background: #06b025; } .pmb .au { margin-top: 7px; }
.lfo { height: 228px; margin-top: 7px; padding: 4px 0 0 10px; } .lfo legend { padding: 0 14px 0 0; margin-left: -5px; } .row { display: grid; align-items: center; height: 29px; } .row.sh { grid-template-columns: 66px 113px 11px 107px 80px; height: 24px; margin-bottom: 6px; } .sh .ck { grid-column: 4; } .sh button { height: 23px; } .sl .tx { grid-column: 4; height: 22px; border: 1px solid #7a7a7a; background: #fff; padding: 0 2px; } .sl .un { grid-column: 6; } .sl { grid-template-columns: 66px 225px 6px 58px 4px 1fr; } .row.di { grid-template-columns: 82px 84px 84px 84px; height: 36px; } .di label { display: flex; align-items: center; } .row.pr2 { grid-template-columns: 82px 274px; height: 22px; margin-top: -2px; } .b2b { width: 314px; margin: 14px 0 0 66px; }
.lfo + .ck { margin-top: 9px; }

.rd { left: 718px; top: 208px; width: 614px; height: 764px; } .rd > header { height: 28px; background: #fff; display: flex; align-items: center; gap: 6px; padding: 0 13px 0 2px; color: #999; font: 13px/20px "Open Sans", sans-serif; } .cl { width: 12px; height: 12px; margin-left: auto; } .rdb { padding: 13px 14px 0 12px; }
.rdb input:not([type]) { height: 22px; border: 1px solid #7a7a7a; background: #fff; padding: 0 2px; min-width: 0; } .rdb input:disabled:not([type]) { background: #f0f0f0; border-color: #ccc; color: #777; } .rdb input[readonly] { background: #f0f0f0; }
.src { display: grid; grid-template-columns: 52px 220px 7px 45px 12px 173px 7px 73px; align-items: center; height: 22px; } .src label + span + label { grid-column: 4; } .src .bo { grid-column: 6; } .src button { grid-column: 8; height: 21px; }
.rdb fieldset { margin-right: -2px; } .rdb legend { margin-left: 5px; padding: 0 3px; } .tb { display: flex; height: 52px; margin-top: 5px; padding: 7px 0 0 9px; align-items: center; } .tb label.off { margin-right: 11px; text-shadow: 1px 1px #fff; } .tb input[id] { width: 74px; margin-right: 8px; } .tb #le { margin-right: 62px; } .tb .tail { margin-top: -6px; } .tb .ms1 { width: 57px; margin: -6px 8px 0 14px; } .tb span { margin-top: -6px; }
.op { height: 108px; margin-top: 5px; } .op div { display: grid; grid-template-columns: 66px 412px 6px 78px; height: 22px; margin: 0 0 7px 13px; align-items: center; } .op div:first-of-type { margin-top: 5px; } .op label { text-align: center; padding-right: 8px; } .op button { grid-column: 4; height: 22px; }
.os { height: 222px; margin-top: 4px; padding-left: 13px; } .os > div { display: grid; align-items: center; height: 22px; } .o1 { grid-template-columns: 76px 101px 4px 44px 62px 77px 46px 155px; margin-top: 4px; } .o1 span:nth-of-type(2) { grid-column: 3 / 5; padding-left: 4px; } .o1 span:nth-of-type(4) { grid-column: 8; } .o2 { grid-template-columns: 360px auto; margin-top: 8px; } .o3 { grid-template-columns: 100px 298px 12px 154px; margin-top: 6px; } .o3 button { grid-column: 4; height: 22px; } .o4 { grid-template-columns: 281px 147px auto; margin-top: 5px; } .os .o4b, .os .o5b { height: 20px; margin-top: -1px; } .o5 { grid-template-columns: 324px 154px 86px; margin-top: 3px; } .os .o5b { margin-top: -2px; } .o5c button { height: 22px; } .os .o5c { margin-top: 3px; }
.tabs { display: flex; align-items: flex-end; margin: 5px 0 0 -3px; height: 21px; } .rdb .tabs button { height: 19px; width: 140px; background: #f0f0f0; border: 1px solid #dcdcdc; border-bottom: 0; } .rdb .tabs .on { height: 21px; width: 128px; background: #fff; }
.fmt { height: 130px; margin: 0 0 0 -3px; width: 591px; border: 1px solid #dcdcdc; background: #f0f0f0; padding: 9px 0 0 17px; box-shadow: inset 0 0 0 2px #fff; } .fmt > div { display: grid; align-items: center; height: 22px; } .g1 { grid-template-columns: 60px 384px; } .g2 { grid-template-columns: 97px 137px 9px 71px 157px; margin: 8px 0 0 4px; } .g2 label:nth-of-type(2) { grid-column: 4; } .g3 { grid-template-columns: 175px auto; margin: 7px 0 0 3px; } .g4 { grid-template-columns: 261px 11px auto; margin: 1px 0 0 3px; } .g4 .ck { grid-column: 3; }
.last2 { display: grid; grid-template-columns: 313px auto; margin-top: 10px; } .last2 .ck { height: 22px; } .last2 > div { display: flex; flex-direction: column; } .acts { display: flex; margin-top: 6px; gap: 10px; } .acts button { width: 144px; height: 24px; } .dry { margin-left: auto; } .a2 { margin-top: 10px; justify-content: flex-end; } .acts .cn2 { width: 77px; } .acts .sv { width: 108px; }

.fxw { left: 984px; top: 298px; width: 1240px; height: 688px; overflow: hidden; } .fxw > header { height: 55px; background: #fff; display: flex; justify-content: flex-end; padding: 7px 1px 0; gap: 36px; } .pin { width: 14px; height: 16px; } .fxw header b { width: 23px; height: 22px; background: #ddd; color: #fff; text-align: center; line-height: 20px; }
.fxb { display: flex; height: 633px; } .fxl { width: 254px; padding: 613px 0 0 4px; } .fxr { flex: 1; min-width: 0; } .f1 { display: flex; gap: 6px; padding: 5px 3px 0 94px; height: 33px; } .f1 input { flex: 1; height: 21px; border: 1px solid #7a7a7a; background: #fff; } .f1 button { width: 22px; height: 20px; } .f2 { display: flex; padding: 0 11px 0 94px; height: 27px; align-items: flex-start; } .f2 .sel { flex: 1; margin-right: 7px; } .f2 button { height: 20px; margin: 1px 6px 0 0; } .pl1 { width: 20px; } .f2 .pr { width: 53px; } .f2 .io { width: 90px; } .f2 .ui { width: 29px; margin-right: 5px; } .f2 .kn { margin-right: 6px; width: 22px; height: 22px; } .f2 input { margin-top: 5px; }
.plug { height: 571px; border: 2px solid #b4b8bc; background: linear-gradient(#1a3242, #06171b 45%, #010f12 55%, #1a3345); font-family: "DejaVu Sans", sans-serif; color: #fff; font-size: 14px; } .phd { height: 36px; display: flex; align-items: center; padding-left: 90px; border-bottom: 2px solid #b4b8bc; background: linear-gradient(90deg, #041216, #1c3242); font-size: 11px; } .phd b { font-size: 17px; margin-left: -5px; } .phd strong { font-size: 17px; color: #8a0cff; margin-right: 15px; } .phd em { font-style: normal; font-size: 10px; margin: 12px 0 0 22px; }
.pbd { display: flex; padding: 0 12px 0 90px; gap: 9px; } .pc { width: 366px; flex: none; padding-left: 2px; } .pv { flex: 1; } .pc h4, .pv h4 { font-size: 14px; line-height: 16px; } .box { border: 1px solid #4a5a60; background: #14242899; } .pc .box { border-left: 0; }
.pc .ds { padding: 11px 0 1px; font-size: 13px; } .ds small { font-size: 10px; font-weight: 400; margin-left: 4px; } .b1 { height: 171px; } .pth { display: flex; height: 23px; margin: 4px 6px 4px 0; font-size: 12px; align-items: center; border: 1px solid #7c888c; border-left: 0; border-radius: 0 11px 11px 0; } .pth span { width: 280px; flex: none; overflow: hidden; font-family: "Liberation Sans", sans-serif; } .pth svg { margin-left: auto; margin-right: 14px; } .pth b { width: 34px; border-left: 1px solid #aaa; text-align: center; } .cols { border-top: 1px solid #4a5a60; display: flex; height: 139px; } .ca { width: 133px; flex: none; padding-top: 6px; } .ca div, .ir { display: flex; justify-content: space-between; height: 25px; align-items: flex-start; line-height: 22px; } .ca span, .ir span { border: 1px solid #42525a; width: 69px; height: 23px; padding-left: 5px; } .cc { flex: 1; padding-top: 6px; } .ir { padding: 0 6px 0 6px; } .ir b { flex: 1; } .parts { border: 1px solid #5a6a70; background: #1c2a2e; height: 57px; padding: 5px 5px 0 4px; font-size: 13px; font-weight: 700; } .parts label { display: flex; justify-content: space-between; height: 25px; line-height: 22px; } .jsel { width: 69px; position: relative; } .jsel select { appearance: none; width: 100%; height: 22px; border: 1px solid #8a9498; border-radius: 4px; background: #243038; padding-left: 6px; font-size: 11px; font-weight: 400; color: #fff; } .jsel.off select { color: #555; background: #101c20; opacity: 1; } .jsel::after { content: ""; position: absolute; right: 8px; top: 5px; width: 7px; height: 7px; border: solid #ddd; border-width: 0 1px 1px 0; transform: rotate(45deg); }
.b2 { height: 50px; margin-top: 7px; padding-top: 3px; } .xyz { display: flex; padding-left: 13px; text-align: center; } .xyz b { width: 62px; margin-right: 1px; line-height: 16px; } .vals { display: flex; padding: 4px 0 0 13px; gap: 8px; line-height: 21px; color: #8c989c; text-align: center; } .vals span { width: 56px; height: 23px; border: 1px solid #66747c; background: #26343c; } .vals .act { color: #fff; background: linear-gradient(#12202a 50%, #35647c 50%); border-color: #9ab; } .vals .hot { background: #4a6470; } .tl2 { padding: 6px 0 2px 29px; } .b3 { height: 54px; display: flex; text-align: center; } .b3a { width: 202px; padding-top: 4px; } .b3a .vals { padding-top: 6px; } .b3b { width: 81px; } .b3c { width: 81px; } .b3b, .b3c { border-left: 1px solid #5a6a70; background: #1c2a2e; padding-top: 4px; line-height: 16px; font-size: 13px; } .b3b span { display: block; width: 55px; height: 23px; line-height: 22px; border: 1px solid #3c4c52; margin: 6px auto 0; text-align: left; padding-left: 6px; } .b3c span { display: block; width: 48px; height: 23px; line-height: 26px; border: 1px solid #3c4c52; margin: 6px auto 0; } .b4 { height: 28px; margin-top: 7px; display: flex; align-items: center; gap: 5px; } .b4 span { width: 192px; height: 23px; border: 1px solid #5a6a78; text-align: center; line-height: 21px; color: #8c989c; } .sf { padding: 4px 0 2px; } .b5 { height: 131px; display: flex; } .en { width: 116px; flex: none; border-right: 1px solid #5a6a70; padding-top: 9px; } .en i { display: block; width: 16px; height: 16px; margin: 9px 0 11px 9px; border-radius: 50%; background: #333d40; text-align: center; font-size: 13px; line-height: 14px; } .en p { font: bold 11px/18px "DejaVu Sans", sans-serif; } .dials { flex: 1; display: flex; padding: 6px 0 0 20px; } .dials > div { width: 72px; } .dials h5 { font-size: 11px; line-height: 18px; white-space: pre; } .dials small { font-size: 10px; font-weight: 400; } .dials svg { width: 60px; height: 54px; margin: 0 0 4px 1px; } .dials span { display: block; width: 66px; height: 17px; line-height: 15px; border: 1px solid #8a9498; text-align: center; margin-left: -3px; } .dials p { display: flex; gap: 5px; padding: 7px 0 0 8px; } .dials p i { width: 16px; height: 16px; border-radius: 50%; border: 1px solid #667; background: #2b3437; }
.pvh { height: 28px; display: flex; justify-content: flex-end; align-items: center; } .pvh h4 { margin: 11px 68px 0 0; } .side { width: 107px; height: 20px; border: 1px solid #9aa4a8; border-radius: 4px; padding-left: 6px; font-size: 12px; line-height: 18px; display: flex; align-items: center; justify-content: space-between; padding-right: 12px; background: #1a2a34; } .view { height: 496px; background: linear-gradient(#122229, #132226 60%, #1d3442); } .view text { font: 11px "DejaVu Sans", sans-serif; fill: #8c989c; } .view .one { fill: #fff; }
</style>
